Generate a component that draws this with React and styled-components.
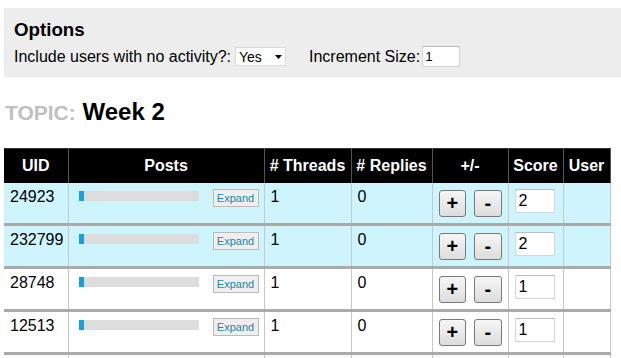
import React from 'react';
import styled, { createGlobalStyle } from 'styled-components';

const GlobalStyle = createGlobalStyle`
  body {
    margin: 0;
    font-family: "Liberation Sans", Arial, sans-serif;
    color: #000;
    background: #fff;
  }
`;

const rows = [
  { uid: '24923', threads: 1, replies: 0, score: 2, highlight: true },
  { uid: '232799', threads: 1, replies: 0, score: 2, highlight: true },
  { uid: '28748', threads: 1, replies: 0, score: 1 },
  { uid: '12513', threads: 1, replies: 0, score: 1 },
  { uid: '', threads: '', replies: '', score: null },
];

const App = () => {
  return (
    <Page>
      <GlobalStyle />
      <OptionsBox>
        <OptionsTitle>Options</OptionsTitle>
        <OptionsRow>
          <label>Include users with no activity?:</label>
          <SelectWrap>
            <Select defaultValue="yes">
              <option value="yes">Yes</option>
              <option value="no">No</option>
            </Select>
            <Arrow width="7" height="4" viewBox="0 0 7 4">
              <path d="M0 0h7L3.5 4z" fill="#000" />
            </Arrow>
          </SelectWrap>
          <IncLabel>Increment Size:</IncLabel>
          <IncInput defaultValue="1" />
        </OptionsRow>
      </OptionsBox>

      <Topic>
        <span className="label">TOPIC:</span> Week 2
      </Topic>

      <Table>
        <colgroup>
          <col style={{ width: 64 }} />
          <col style={{ width: 196 }} />
          <col style={{ width: 87 }} />
          <col style={{ width: 81 }} />
          <col style={{ width: 76 }} />
          <col style={{ width: 55 }} />
          <col style={{ width: 47 }} />
        </colgroup>
        <thead>
          <tr>
            <th>UID</th>
            <th>Posts</th>
            <th># Threads</th>
            <th># Replies</th>
            <th>+/-</th>
            <th>Score</th>
            <th>User</th>
          </tr>
        </thead>
        <tbody>
          {rows.map((r, i) => (
            <Row key={i} $highlight={r.highlight}>
              <td>{r.uid}</td>
              <PostsCell>
                {r.uid && (
                  <div className="posts">
                    <Bar>
                      <span />
                    </Bar>
                    <ExpandButton>Expand</ExpandButton>
                  </div>
                )}
              </PostsCell>
              <td>{r.threads}</td>
              <td>{r.replies}</td>
              <StepCell>
                {r.uid && (
                  <div className="steps">
                    <StepButton>+</StepButton>
                    <StepButton>-</StepButton>
                  </div>
                )}
              </StepCell>
              <td>{r.score !== null && <ScoreInput defaultValue={r.score} />}</td>
              <td></td>
            </Row>
          ))}
        </tbody>
      </Table>
    </Page>
  );
};

export default App;

const Page = styled.div`
  padding: 8px 0 0 4px;
`;

const OptionsBox = styled.div`
  background: #ededed;
  padding: 11px 10px 10px;
`;

const OptionsTitle = styled.h3`
  margin: 0 0 5px;
  font-size: 18.72px;
  line-height: 22px;
  font-weight: bold;
`;

const OptionsRow = styled.div`
  display: flex;
  align-items: center;
  height: 21px;
  font-size: 16px;
`;

const SelectWrap = styled.div`
  position: relative;
  margin-left: 4px;
`;

const Select = styled.select`
  appearance: none;
  -webkit-appearance: none;
  display: block;
  width: 51px;
  height: 19px;
  border: 1px solid #dadada;
  border-radius: 0;
  background: #fff;
  font-family: "Liberation Sans", Arial, sans-serif;
  font-size: 14px;
  padding: 0 0 0 3px;
  color: #000;
  outline: none;
`;

const Arrow = styled.svg`
  position: absolute;
  right: 4px;
  top: 8px;
  pointer-events: none;
`;

const IncLabel = styled.label`
  margin-left: 23px;
`;

const IncInput = styled.input`
  width: 38px;
  height: 21px;
  box-sizing: border-box;
  margin-left: 2px;
  border: 1px solid #d4d4d4;
  border-top-color: #b8b8b8;
  font-family: "Liberation Sans", Arial, sans-serif;
  font-size: 13.33px;
  padding: 0 2px;
  outline: none;
`;

const Topic = styled.h2`
  margin: 21px 0 21px 1px;
  font-size: 24px;
  line-height: 28px;
  font-weight: bold;

  .label {
    color: #c0c0c0;
    font-size: 21px;
  }
`;

const Table = styled.table`
  border-collapse: collapse;
  table-layout: fixed;
  width: 606px;
  font-size: 16px;

  th {
    background: #000;
    color: #fff;
    font-weight: bold;
    text-align: center;
    height: 34px;
    padding: 0 4px;
    border-top: 1px solid #333;
    border-left: 1px solid #555;
    border-right: 1px solid #555;
    white-space: nowrap;
  }

  th:first-child {
    border-left: none;
  }

  td {
    vertical-align: top;
    padding: 5px 6px 6px;
    border-left: 1px solid #c8c8c8;
    border-right: 1px solid #c8c8c8;
    line-height: 18px;
  }

  td:first-child {
    border-left: none;
  }
`;

const Row = styled.tr`
  background: ${p => (p.$highlight ? '#cef5fe' : '#fff')};
  border-bottom: 3px solid #aaaaaa;
`;

const PostsCell = styled.td`
  && {
    padding-left: 10px;
    padding-right: 5px;
  }

  .posts {
    display: flex;
    justify-content: space-between;
    align-items: flex-start;
  }
`;

const Bar = styled.div`
  width: 120px;
  height: 10px;
  margin-top: 3px;
  background: #dddddd;

  span {
    display: block;
    width: 5px;
    height: 100%;
    background: #15a0e0;
  }
`;

const ExpandButton = styled.button`
  width: 46px;
  height: 18px;
  margin-top: 1px;
  padding: 0;
  border: 1px solid #bbbbbb;
  background: #efefef;
  color: #2484a8;
  font-family: "Liberation Sans", Arial, sans-serif;
  font-size: 11px;
  line-height: 15px;
  cursor: pointer;
`;

const StepCell = styled.td`
  .steps {
    display: flex;
    justify-content: center;
    gap: 8px;
    margin-top: 2px;
  }
`;

const StepButton = styled.button`
  width: 28px;
  height: 27px;
  padding: 0;
  border: 1px solid #7a7a7a;
  border-radius: 3px;
  background: linear-gradient(#f6f6f6, #dddddd);
  color: #000;
  font-family: "Liberation Sans", Arial, sans-serif;
  font-size: 20px;
  font-weight: bold;
  line-height: 25px;
  cursor: pointer;
`;

const ScoreInput = styled.input`
  display: block;
  width: 40px;
  height: 24px;
  box-sizing: border-box;
  margin-top: 1px;
  border: 1px solid #d6d6d6;
  border-top-color: #bdbdbd;
  font-family: "Liberation Sans", Arial, sans-serif;
  font-size: 16px;
  padding: 0 3px;
  outline: none;
`;
